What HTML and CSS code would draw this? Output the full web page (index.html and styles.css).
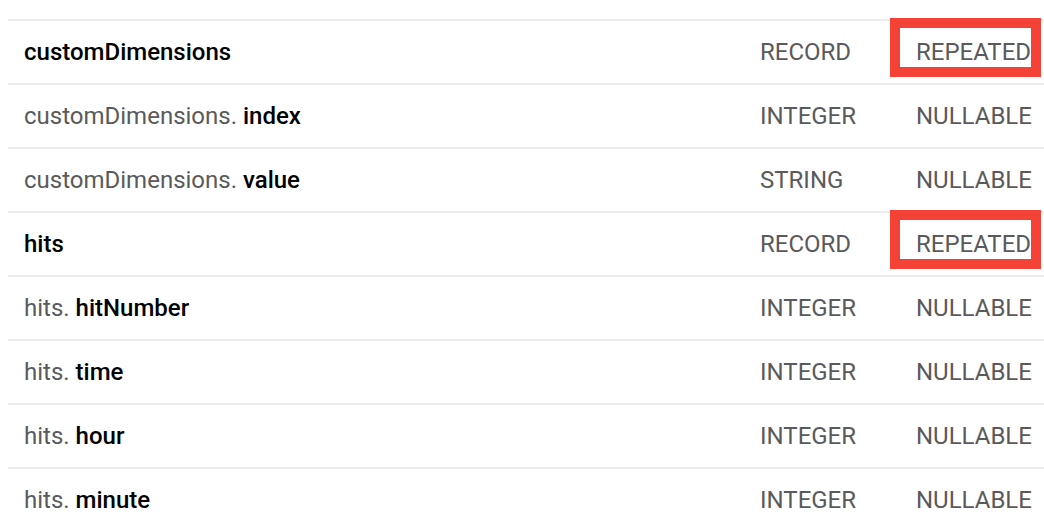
FILE: index.html
```html
<!DOCTYPE html>
<html>
<head>
<meta charset="utf-8">
<link rel="stylesheet" href="styles.css">
</head>
<body>
<div class="schema">
  <div class="row">
    <div class="name"><b>customDimensions</b></div>
    <div class="type">RECORD</div>
    <div class="mode"><span class="mark">REPEATED</span></div>
  </div>
  <div class="row">
    <div class="name">customDimensions. <b>index</b></div>
    <div class="type">INTEGER</div>
    <div class="mode">NULLABLE</div>
  </div>
  <div class="row">
    <div class="name">customDimensions. <b>value</b></div>
    <div class="type">STRING</div>
    <div class="mode">NULLABLE</div>
  </div>
  <div class="row">
    <div class="name"><b>hits</b></div>
    <div class="type">RECORD</div>
    <div class="mode"><span class="mark">REPEATED</span></div>
  </div>
  <div class="row">
    <div class="name">hits. <b>hitNumber</b></div>
    <div class="type">INTEGER</div>
    <div class="mode">NULLABLE</div>
  </div>
  <div class="row">
    <div class="name">hits. <b>time</b></div>
    <div class="type">INTEGER</div>
    <div class="mode">NULLABLE</div>
  </div>
  <div class="row">
    <div class="name">hits. <b>hour</b></div>
    <div class="type">INTEGER</div>
    <div class="mode">NULLABLE</div>
  </div>
  <div class="row">
    <div class="name">hits. <b>minute</b></div>
    <div class="type">INTEGER</div>
    <div class="mode">NULLABLE</div>
  </div>
</div>
</body>
</html>
```

FILE: styles.css
```css
html, body {
  margin: 0;
  padding: 0;
  background: #fff;
}
body {
  font-family: Roboto, "Liberation Sans", sans-serif;
  font-size: 24px;
  line-height: 28px;
  color: #5a5a5a;
  overflow: hidden;
}
.schema {
  padding: 19px 0 0 8px;
}
.row {
  display: grid;
  grid-template-columns: 752px 156px 1fr;
  align-items: center;
  height: 62px;
  border-top: 2px solid #ebebeb;
}
.name {
  padding-left: 16px;
  white-space: nowrap;
}
.name b {
  font-weight: 500;
  color: #000;
}
.mark {
  position: relative;
  display: inline-block;
}
.mark::after {
  content: "";
  position: absolute;
  left: -26px;
  top: -20px;
  width: 131px;
  height: 39px;
  border: 10px solid #f44336;
}
```
